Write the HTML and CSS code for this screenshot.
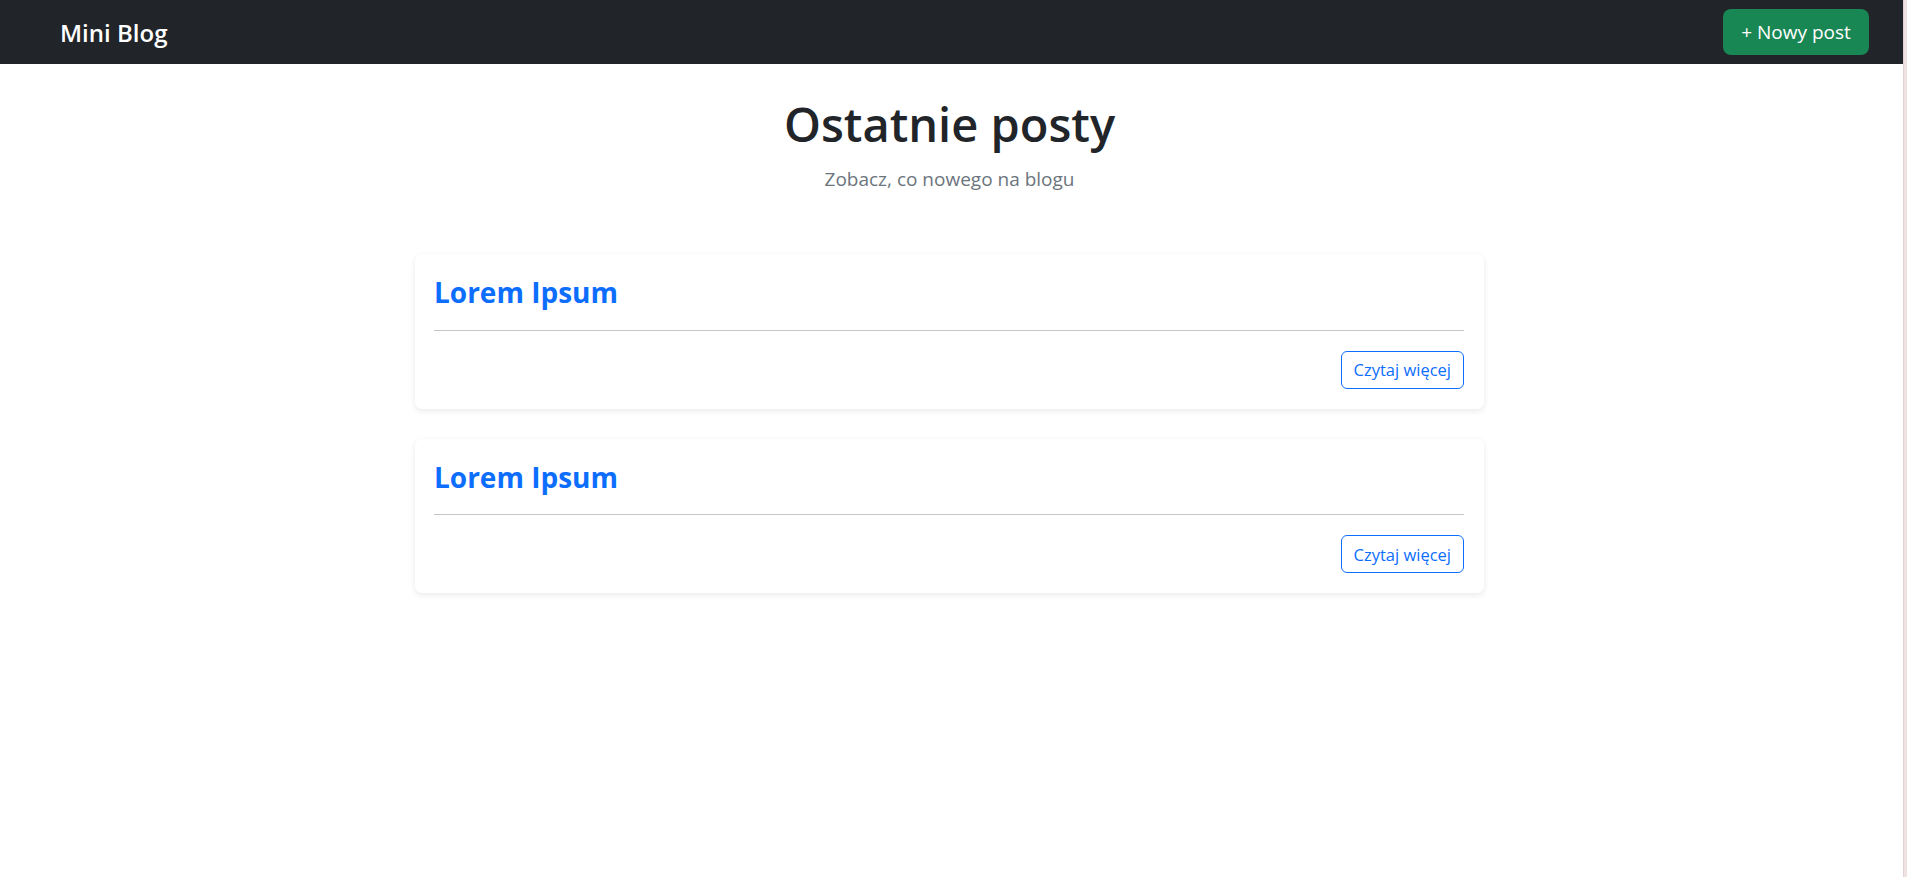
FILE: index.html
```html
<!DOCTYPE html>
<html lang="pl">
<head>
<meta charset="utf-8">
<title>Mini Blog</title>
<link rel="stylesheet" href="styles.css">
</head>
<body>
<div class="page">
  <nav class="navbar">
    <a class="brand" href="#">Mini Blog</a>
    <a class="btn-new" href="#">+ Nowy post</a>
  </nav>
  <main class="content">
    <header class="intro">
      <h1 class="intro-title">Ostatnie posty</h1>
      <p class="intro-lead">Zobacz, co nowego na blogu</p>
    </header>
    <section class="posts">
      <article class="card">
        <h3 class="card-title">Lorem Ipsum</h3>
        <hr class="card-rule">
        <div class="card-actions">
          <a class="btn-more" href="#">Czytaj więcej</a>
        </div>
      </article>
      <article class="card">
        <h3 class="card-title">Lorem Ipsum</h3>
        <hr class="card-rule">
        <div class="card-actions">
          <a class="btn-more" href="#">Czytaj więcej</a>
        </div>
      </article>
    </section>
  </main>
</div>
<div class="edge"></div>
</body>
</html>
```

FILE: styles.css
```css
* { box-sizing: border-box; }
html, body { margin: 0; padding: 0; }
body {
  display: flex;
  min-height: 877px;
  background: #fff;
  font-family: "Open Sans", "Noto Sans", sans-serif;
  color: #212529;
}
.page { flex: 1; min-width: 0; }
.edge {
  width: 4px;
  background: #efe2e2;
  border-left: 1px solid #e2d2d2;
}
.navbar {
  height: 64px;
  background: #212529;
  display: flex;
  align-items: center;
  justify-content: space-between;
  padding: 0 34px 0 60px;
}
.brand {
  color: #fff;
  text-decoration: none;
  font-size: 24px;
  font-weight: 600;
}
.btn-new {
  display: inline-flex;
  align-items: center;
  justify-content: center;
  width: 146px;
  height: 46px;
  background: #198754;
  color: #fff;
  text-decoration: none;
  font-size: 19px;
  border-radius: 8px;
}
.content {
  padding: 32px 4px 40px 0;
}
.intro { text-align: center; }
.intro-title {
  margin: 0;
  font-size: 47px;
  font-weight: 600;
  line-height: 1.225;
}
.intro-lead {
  margin: 11px 0 0;
  color: #6c757d;
  font-size: 19px;
  line-height: 1.5;
}
.posts {
  width: 1069px;
  margin: 61px auto 0;
  display: flex;
  flex-direction: column;
  gap: 30px;
}
.card {
  background: #fff;
  border-radius: 7px;
  box-shadow: 0 2px 6px rgba(0,0,0,0.09);
  padding: 22px 20px 20px 19px;
}
.card-title {
  margin: 0;
  color: #0d6efd;
  font-size: 28px;
  font-weight: 700;
  line-height: 1.2;
}
.card-rule {
  margin: 20px 0 20px;
  border: 0;
  border-top: 1px solid #c6c7c8;
}
.card-actions {
  display: flex;
  justify-content: flex-end;
}
.btn-more {
  display: inline-flex;
  align-items: center;
  height: 38px;
  padding: 0 12px;
  border: 1px solid #0d6efd;
  border-radius: 6px;
  color: #0d6efd;
  text-decoration: none;
  font-size: 16.5px;
}
```
